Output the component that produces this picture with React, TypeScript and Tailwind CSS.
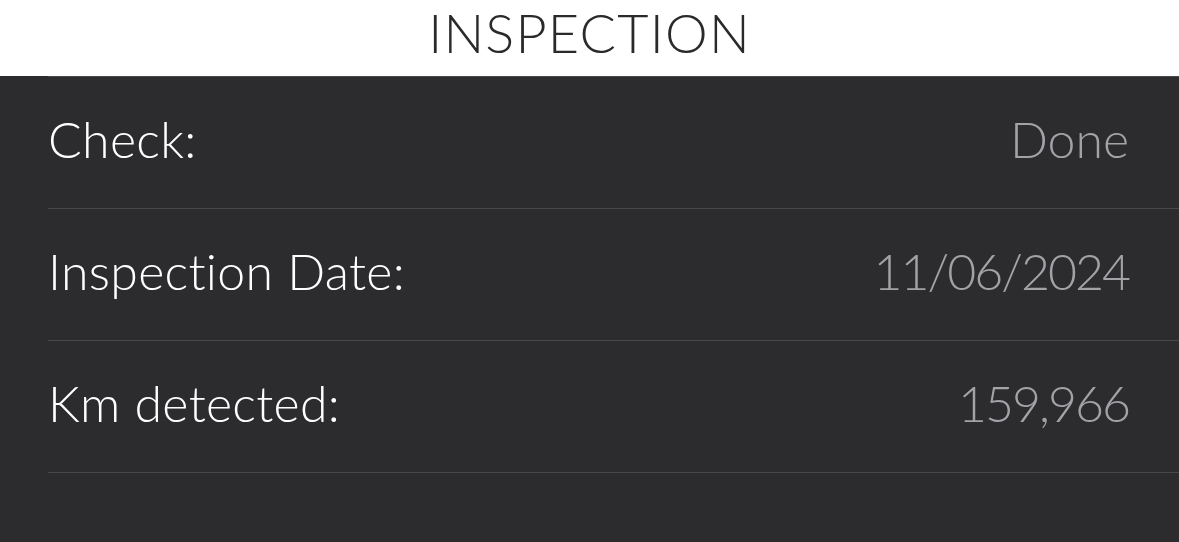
const rows = [
  { label: "Check:", value: "Done", tight: false },
  { label: "Inspection Date:", value: "11/06/2024", tight: true },
  { label: "Km detected:", value: "159,966", tight: true },
];

export default function App() {
  return (
    <div className="w-[1179px] h-[542px] overflow-hidden bg-[#2c2c2e] font-['Lato','Liberation_Sans',sans-serif] [font-variant-ligatures:none]">
      <div className="h-[76px] bg-white flex justify-center pt-[3px]">
        <h1 className="text-[54px] leading-[60px] font-light text-[#2a2a2c] tracking-[1.2px]">INSPECTION</h1>
      </div>
      <div className="pl-[48px]">
        {rows.map((r) => (
          <div key={r.label} className="h-[132px] flex items-center justify-between pr-[50px] pb-[6px] border-t border-[#48484a]">
            <span className="text-[50px] font-light text-white tracking-[0.3px]">{r.label}</span>
            <span className={r.tight ? "text-[50px] font-light text-[#a2a2a7] tracking-[-2px]" : "text-[50px] font-light text-[#a2a2a7]"}>
              {r.value}
            </span>
          </div>
        ))}
        <div className="border-t border-[#48484a]" />
      </div>
    </div>
  );
}
